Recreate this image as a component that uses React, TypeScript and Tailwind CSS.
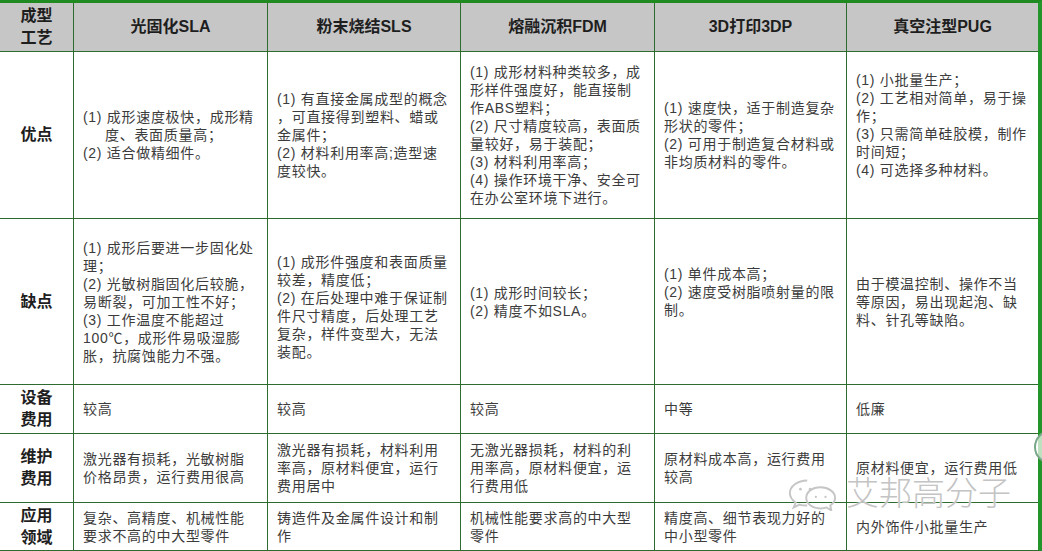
import React from "react";

type Cell = { lines: string[]; indent?: number[]; className?: string };

const headers = ["光固化SLA", "粉末烧结SLS", "熔融沉积FDM", "3D打印3DP", "真空注型PUG"];

const rows: { label: string[]; cells: Cell[] }[] = [
  {
    label: ["优点"],
    cells: [
      {
        lines: ["(1) 成形速度极快，成形精", "度、表面质量高；", "(2) 适合做精细件。"],
        indent: [1],
      },
      {
        lines: [
          "(1) 有直接金属成型的概念",
          "，可直接得到塑料、蜡或",
          "金属件；",
          "(2) 材料利用率高;造型速",
          "度较快。",
        ],
      },
      {
        lines: [
          "(1) 成形材料种类较多，成",
          "形样件强度好，能直接制",
          "作ABS塑料；",
          "(2) 尺寸精度较高，表面质",
          "量较好，易于装配；",
          "(3) 材料利用率高；",
          "(4) 操作环境干净、安全可",
          "在办公室环境下进行。",
        ],
      },
      {
        lines: [
          "(1) 速度快，适于制造复杂",
          "形状的零件；",
          "(2) 可用于制造复合材料或",
          "非均质材料的零件。",
        ],
      },
      {
        lines: [
          "(1) 小批量生产；",
          "(2) 工艺相对简单，易于操",
          "作；",
          "(3) 只需简单硅胶模，制作",
          "时间短；",
          "(4) 可选择多种材料。",
        ],
        className: "pb-[20px]",
      },
    ],
  },
  {
    label: ["缺点"],
    cells: [
      {
        lines: [
          "(1) 成形后要进一步固化处",
          "理；",
          "(2) 光敏树脂固化后较脆，",
          "易断裂，可加工性不好；",
          "(3) 工作温度不能超过",
          "100℃，成形件易吸湿膨",
          "胀，抗腐蚀能力不强。",
        ],
      },
      {
        lines: [
          "(1) 成形件强度和表面质量",
          "较差，精度低；",
          "(2) 在后处理中难于保证制",
          "件尺寸精度，后处理工艺",
          "复杂，样件变型大，无法",
          "装配。",
        ],
        className: "pt-[10px]",
      },
      { lines: ["(1) 成形时间较长；", "(2) 精度不如SLA。"] },
      {
        lines: ["(1) 单件成本高；", "(2) 速度受树脂喷射量的限", "制。"],
        className: "pb-[20px]",
      },
      { lines: ["由于模温控制、操作不当", "等原因，易出现起泡、缺", "料、针孔等缺陷。"] },
    ],
  },
  {
    label: ["设备", "费用"],
    cells: [
      { lines: ["较高"] },
      { lines: ["较高"] },
      { lines: ["较高"] },
      { lines: ["中等"] },
      { lines: ["低廉"] },
    ],
  },
  {
    label: ["维护", "费用"],
    cells: [
      { lines: ["激光器有损耗，光敏树脂", "价格昂贵，运行费用很高"] },
      { lines: ["激光器有损耗，材料利用", "率高，原材料便宜，运行", "费用居中"] },
      { lines: ["无激光器损耗，材料的利", "用率高，原材料便宜，运", "行费用低"] },
      { lines: ["原材料成本高，运行费用", "较高"] },
      { lines: ["原材料便宜，运行费用低"] },
    ],
  },
  {
    label: ["应用", "领域"],
    cells: [
      { lines: ["复杂、高精度、机械性能", "要求不高的中大型零件"] },
      { lines: ["铸造件及金属件设计和制", "作"] },
      { lines: ["机械性能要求高的中大型", "零件"] },
      { lines: ["精度高、细节表现力好的", "中小型零件"] },
      { lines: ["内外饰件小批量生产"] },
    ],
  },
];

function BodyCell({ lines, indent = [], className = "" }: Cell) {
  return (
    <div className={`bg-white flex flex-col justify-center pl-[9px] text-[14px] leading-[18px] tracking-[0.7px] text-[#3c3c3c] ${className}`}>
      {lines.map((line, i) => (
        <div key={i} className={`whitespace-pre ${indent.includes(i) ? "pl-[22px]" : ""}`}>
          {line}
        </div>
      ))}
    </div>
  );
}

function Label({ lines }: { lines: string[] }) {
  return (
    <div className="bg-white flex flex-col items-center justify-center text-[16px] leading-[22px] font-bold text-[#1e1e1e]">
      {lines.map((l) => (
        <div key={l}>{l}</div>
      ))}
    </div>
  );
}

function WeChatMark() {
  return (
    <svg width="52" height="34" viewBox="0 0 54 34" fill="none" stroke="#c6c6c6" strokeWidth="2">
      <path d="M22 3c-10 0-18 6-18 13 0 4 2 7 6 10l-2 5 6-3c3 1 5 1 8 1" />
      <path d="M36 10c-9 0-15 5-15 11s6 11 15 11c2 0 4 0 6-1l5 3-1-5c3-2 5-5 5-8 0-6-7-11-15-11z" />
      <circle cx="15" cy="12" r="1.4" fill="#c6c6c6" stroke="none" />
      <circle cx="25" cy="12" r="1.4" fill="#c6c6c6" stroke="none" />
      <circle cx="31" cy="20" r="1.2" fill="#c6c6c6" stroke="none" />
      <circle cx="41" cy="20" r="1.2" fill="#c6c6c6" stroke="none" />
    </svg>
  );
}

export default function App() {
  return (
    <div
      className="relative w-[1042px] h-[551px] overflow-hidden bg-white"
      style={{ fontFamily: '"Liberation Sans", "Noto Sans CJK SC", sans-serif' }}
    >
      <div className="grid grid-cols-[73px_193px_192px_193px_191px_191px] grid-rows-[48px_166px_165px_48px_68px_47px] gap-px bg-[#2e6b2e] border-t-[3px] border-t-[#1f8a1f] border-r-[4px] border-r-[#22962a] border-b border-b-[#2e6b2e]">
        <div className="bg-[#c6c6c6] flex flex-col items-center justify-center text-[16px] leading-[22px] font-bold text-[#1e1e1e]">
          <div>成型</div>
          <div>工艺</div>
        </div>
        {headers.map((h) => (
          <div key={h} className="bg-[#c6c6c6] flex items-center justify-center text-[16px] font-bold text-[#1e1e1e]">
            {h}
          </div>
        ))}
        {rows.map((row) => (
          <React.Fragment key={row.label.join("")}>
            <Label lines={row.label} />
            {row.cells.map((c, i) => (
              <BodyCell key={i} {...c} />
            ))}
          </React.Fragment>
        ))}
      </div>

      <div className="absolute left-[786px] top-[474px] flex items-center gap-[8px] pointer-events-none">
        <WeChatMark />
        <span className="text-[33px] leading-[40px] font-light text-[#c4c4c4] [text-shadow:0_0_2px_#fff]">
          艾邦高分子
        </span>
      </div>

      <div className="absolute left-[1034px] top-[430px] w-[34px] h-[34px] rounded-full border-2 border-[#7aa88a] bg-white/70" />
    </div>
  );
}
